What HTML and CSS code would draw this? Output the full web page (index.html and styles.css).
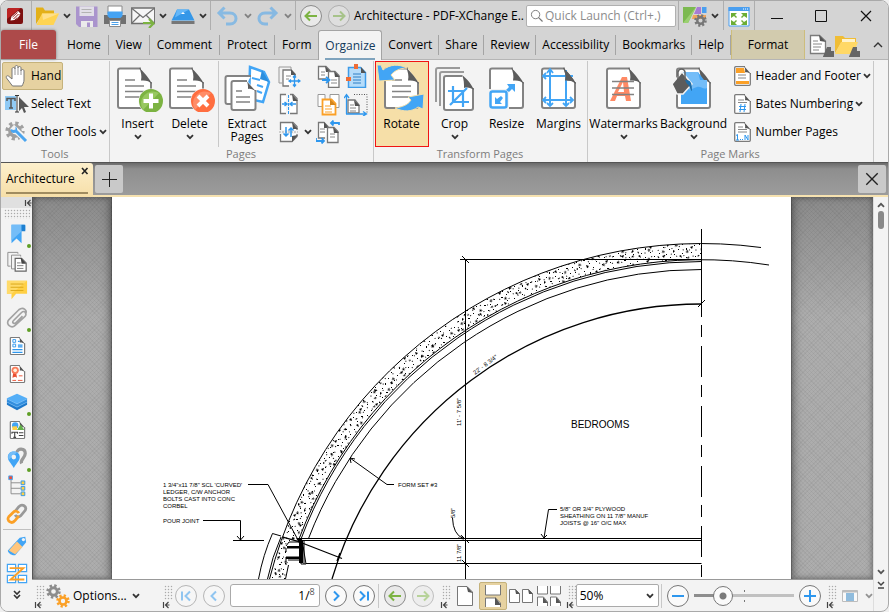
FILE: index.html
```html
<!DOCTYPE html>
<html lang="en">

<head>
    <meta charset="UTF-8">
    <meta name="viewport" content="width=device-width, initial-scale=1.0">
    <title>Architecture - PDF-XChange Editor</title>
    <link rel="stylesheet" href="styles.css">
</head>

<body>
    <!-- Shared icons -->
    <svg class="sprite" aria-hidden="true">
        <symbol id="chev" viewBox="0 0 8 6"><path d="M1 1.2l3 3 3-3" fill="none" stroke="currentColor" stroke-width="1.8"/></symbol>
        <symbol id="page" viewBox="0 0 52 48">
            <path d="M29 4.5H8a2 2 0 0 0-2 2V42a2 2 0 0 0 2 2h29a2 2 0 0 0 2-2V18" fill="#fff" stroke="#838383" stroke-width="2"/>
            <path d="M27 3.5c4 4 10 10 13 16.500-3-3-6-4-11-3.500 1-5 0-9-2-13z" fill="#5c5c5c"/>
        </symbol>
        <symbol id="lines" viewBox="0 0 52 48"><path d="M13 16h10M13 22h19M13 27.500h19M13 33h19" stroke="#838383" stroke-width="1.6"/></symbol>
        <symbol id="doc" viewBox="0 0 24 24">
            <path d="M15 2.700H5.700a1 1 0 0 0-1 1v16.600a1 1 0 0 0 1 1h13.600a1 1 0 0 0 1-1V9" fill="#fff" stroke="#7b7b7b" stroke-width="1.3"/>
            <path d="M14 2l7 8c-2-1.500-4-2-6-1.800.500-2 0-4.200-1-6.200z" fill="#555"/>
        </symbol>
        <symbol id="left" viewBox="0 0 24 24"><circle cx="12" cy="12" r="10.5" fill="#e9e9e9" stroke="#8a8a8a"/><path d="M6.500 12H18M11 7.500L6.500 12l4.500 4.500" fill="none" stroke="#7cb342" stroke-width="2"/></symbol>
        <symbol id="right" viewBox="0 0 24 24"><circle cx="12" cy="12" r="10.5" fill="#e9e9e9" stroke="#8a8a8a"/><path d="M6 12h11.500M13 7.500l4.500 4.500-4.500 4.500" fill="none" stroke="#7cb342" stroke-width="2"/></symbol>
        <symbol id="collapse" viewBox="0 0 8 8"><path d="M1.500 1v6M3 4h4.500M6.500 1l-3 3 3 3" fill="none" stroke="#444" stroke-width="1.2"/></symbol>
        <symbol id="binoc" viewBox="0 0 12 12"><path d="M3 1h2v2h2V1h2l2.500 6v4H7V8H5v3H.500V7z" fill="#666"/><path d="M2 7h2v3H2zM8 7h2v3H8z" fill="#8fa9bd"/></symbol>
        <symbol id="gear" viewBox="0 0 16 16"><circle cx="8" cy="8" r="6.2" fill="none" stroke="currentColor" stroke-width="3" stroke-dasharray="2.5 2.37"/><circle cx="8" cy="8" r="4" fill="none" stroke="currentColor" stroke-width="3"/></symbol>
    </svg>

    <div class="window">
        <header class="titlebar">
            <div class="bar-group app">
                <svg width="18" height="18" viewBox="0 0 18 18"><rect x="1" y="1" width="16" height="16" rx="2" fill="#7d1010"/><path d="M1 3l2-2h12L1 12z" fill="#bb2323"/><path d="M4.500 13.500l1-4L12 4l2.500 2.500-6 6.500zM12 9l2.500-1.500L10 13z" fill="#fff"/><path d="M6.500 10l5-4.500M7.500 12l5-5" stroke="#9c1b1b"/></svg>
            </div>
            <div class="bar-group files">
                <button aria-label="Open"><svg viewBox="0 0 24 24"><path d="M1 20V3.500h7l2 3h9V11H7z" fill="#e3b018"/><path d="M7 9.500h17L18.500 21H1.500z" fill="#ffd452"/><path d="M7 9.500h17L8 16z" fill="#ffe08a"/></svg></button>
                <button class="drop" aria-label="Open options"><svg><use href="#chev"/></svg></button>
                <button class="save" aria-label="Save"><svg viewBox="0 0 24 24"><path d="M1 2.500h21.500V23H4l-3-3z" fill="#a68dcc"/><path d="M4.500 2.500H19V12H4.500z" fill="#e4e0ea"/><path d="M6.500 5.500h10M6.500 8.500h10" stroke="#b0b0b0"/><path d="M6 17h12v6H6z" fill="#eee"/><path d="M12 18.500h3V23h-3z" fill="#a68dcc"/></svg></button>
                <button class="spaced" aria-label="Print"><svg viewBox="0 0 24 24"><path d="M5 2h14v8H5z" fill="#fff" stroke="#8a8a8a"/><path d="M1 11h22v9H1z" fill="#707070"/><path d="M4.500 7.500h15V12l-2 2h-11l-2-2z" fill="#45a3f3"/><path d="M6.500 16.500h11v6h-11z" fill="#fff" stroke="#8a8a8a"/><path d="M8.500 18.500h7M8.500 20.500h7" stroke="#4a9fe8"/></svg></button>
                <button class="spaced" aria-label="Send"><svg viewBox="0 0 24 24"><path d="M.700 4h23v15.500H.700z" fill="#f6f6f6" stroke="#6f6f6f" stroke-width="1.3"/><path d="M1 4.500l11 9 11-9M1 19l8-8M23 19l-8-8" fill="none" stroke="#6f6f6f" stroke-width="1.2"/><path d="M12 19h10M18 15l4.500 4.500L18 24" fill="none" stroke="#7cb342" stroke-width="2.2"/></svg></button>
                <button class="drop" aria-label="Send options"><svg><use href="#chev"/></svg></button>
                <button aria-label="Scan"><svg viewBox="0 0 24 24"><path d="M6 5.500h12l5.500 11H.500z" fill="#3597e8"/><path d="M6 5.500h12l-14 8z" fill="#65b7f8"/><path d="M10 10l2-2 2 2z" fill="#fff"/><path d="M.500 17h23v3H.500z" fill="#777"/></svg></button>
                <button class="drop" aria-label="Scan options"><svg><use href="#chev"/></svg></button>
            </div>
            <div class="bar-group history">
                <button class="dim" aria-label="Undo"><svg viewBox="0 0 24 24"><path d="M8.500 3.500L3 9l5.500 5.500M4 9h10c8 0 8 11 0 11h-4" fill="none" stroke="#3c9ff0" stroke-width="3"/></svg></button>
                <button class="drop dim" aria-label="Undo list"><svg><use href="#chev"/></svg></button>
                <button class="dim" aria-label="Redo"><svg viewBox="0 0 24 24"><path d="M14.500 3.500L20 9l-5.500 5.500M19 9H9c-8 0-8 11 0 11h3" fill="none" stroke="#3c9ff0" stroke-width="3"/></svg></button>
                <button class="drop dim" aria-label="Redo list"><svg><use href="#chev"/></svg></button>
            </div>
            <div class="bar-group nav">
                <button aria-label="Previous view"><svg><use href="#left"/></svg></button>
                <button class="spaced dim" aria-label="Next view"><svg><use href="#right"/></svg></button>
            </div>
            <h1>Architecture - PDF-XChange E..</h1>
            <label class="search">
                <svg viewBox="0 0 14 14"><circle cx="6" cy="6" r="4.5" fill="none" stroke="#777"/><path d="M9 9l4.500 4.500" stroke="#777" stroke-width="1.3"/></svg>
                <input type="text" placeholder="Quick Launch (Ctrl+.)" aria-label="Quick Launch">
            </label>
            <div class="bar-group theme">
                <button aria-label="Themes"><svg viewBox="0 0 24 24"><path d="M0 3h13L5 19H0z" fill="#7cb950"/><path d="M13 3L5 19H0z" fill="#9bd071"/><path d="M14 3h4v7h-7z" fill="#a77bd5"/><path d="M19 3h4.500v6H19z" fill="#4a9ff0"/><path d="M10 11h13v4H9z" fill="#f3a65c"/><svg x="11" y="10" width="13" height="13" color="#777"><use href="#gear"/></svg></svg></button>
                <button class="drop" aria-label="Theme list"><svg><use href="#chev"/></svg></button>
            </div>
            <div class="bar-group full">
                <button aria-label="Full screen"><svg viewBox="0 0 24 24"><path d="M2 3.500h20V22H2z" fill="#fff" stroke="#4a9ff0"/><path d="M1.500 3h21v4h-21z" fill="#4a9ff0"/><path d="M16 5h1M18 5h1M20 5h1" stroke="#fff"/><path d="M4 9h6l-2 2 2 2-1 1-2-2-3 2zM20 9h-6l2 2-2 2 1 1 2-2 3 2zM4 21h6l-2-2 2-2-1-1-2 2-3-2zM20 21h-6l2-2-2-2 1-1 2 2 3-2z" fill="#6cad35"/></svg></button>
            </div>
            <div class="win-buttons">
                <button aria-label="Minimize"><svg viewBox="0 0 14 14"><path d="M1 9.500h12" stroke="#111"/></svg></button>
                <button aria-label="Maximize"><svg viewBox="0 0 14 14"><path d="M1.500 1.500h11v11h-11z" fill="none" stroke="#111"/></svg></button>
                <button aria-label="Close"><svg viewBox="0 0 14 14"><path d="M2 2l10 10M12 2L2 12" stroke="#111" stroke-width="1.2"/></svg></button>
            </div>
        </header>

        <nav class="tabs">
            <button class="file-tab">File</button>
            <div class="tab-list">
                <button>Home</button>
                <button>View</button>
                <button>Comment</button>
                <button>Protect</button>
                <button class="no-line">Form</button>
                <button class="active">Organize</button>
                <button>Convert</button>
                <button>Share</button>
                <button>Review</button>
                <button>Accessibility</button>
                <button>Bookmarks</button>
                <button>Help</button>
            </div>
            <button class="format-tab">Format</button>
            <div class="tab-tools">
                <button aria-label="Find"><svg viewBox="0 0 26 24"><path d="M11.500 2.500h-9v18h15V8z" fill="#fff" stroke="#7b7b7b" stroke-width="1.3"/><path d="M11 2l7 7-6-1z" fill="#555"/><path d="M5 8h5M5 11h9M5 14h8M5 17h6" stroke="#888"/><svg x="12" y="12" width="11" height="11"><use href="#binoc"/></svg></svg></button>
                <button aria-label="Search"><svg viewBox="0 0 26 24"><path d="M1 20V3h8l2 2h11v5H7z" fill="#f0bd35"/><path d="M7 9h17l-5 12H1z" fill="#ffd866"/><path d="M8 6h13v3H8z" fill="#fff3cc"/><svg x="12" y="12" width="11" height="11"><use href="#binoc"/></svg></svg></button>
                <button class="fold" aria-label="Collapse ribbon"><svg viewBox="0 0 10 6"><path d="M1 5l4-4 4 4" fill="none" stroke="#333" stroke-width="1.4"/></svg></button>
            </div>
        </nav>

        <section class="ribbon">
            <div class="group">
                <div class="group-body rows">
                    <button class="row-btn selected"><svg viewBox="0 0 24 24"><path d="M7.500 22l-6-8c-1-2 1-3 2.500-1.500L7 15V5c0-2 3-2 3 0V3c0-2 3-2 3 0v1c0-2 3-2 3 0v3c0-2 3-2 3 0v9c0 2-1 4-2 6z" fill="#fff" stroke="#777"/><path d="M10 5v6M13 4v7M16 6v5" stroke="#999"/></svg>Hand</button>
                    <button class="row-btn"><svg viewBox="0 0 24 24"><path d="M0 4h11v14H0z" fill="#90caf5"/><path d="M2 9V6.500h8V9M6 6.500V16M4 16h4" fill="none" stroke="#555" stroke-width="1.5"/><path d="M10 3.500h4M10 20h4M12 3.500V20" stroke="#333"/><path d="M14 5v14l3-3 2 5 2-1-2-5h5z" fill="#555"/></svg>Select Text</button>
                    <button class="row-btn"><svg viewBox="0 0 24 24"><svg x="0" y="1" width="20" height="20" color="#a0a0a0"><use href="#gear"/></svg><path d="M7 7l14 13" stroke="#f3f3f3" stroke-width="6"/><path d="M11 11l10 10" stroke="#4aa5f0" stroke-width="3"/><path d="M5.500 9c0 4 3 5 6 3 1-2 1-4-1-5.500v3l-2 .500z" fill="#4aa5f0"/></svg>Other Tools<svg class="chev"><use href="#chev"/></svg></button>
                </div>
                <h2>Tools</h2>
            </div>

            <div class="group">
                <div class="group-body pages">
                    <button class="big"><svg viewBox="0 0 52 48"><use href="#page"/><use href="#lines"/><circle cx="39" cy="37" r="12.5" fill="#f3f3f3"/><circle cx="39" cy="37" r="12" fill="#7cb342"/><path d="M31 46a12 12 0 0 1 16-17z" fill="#98c860"/><path d="M39 29.500v15M31.500 37h15" stroke="#fff" stroke-width="4"/></svg>Insert<svg class="chev"><use href="#chev"/></svg></button>
                    <button class="big"><svg viewBox="0 0 52 48"><use href="#page"/><use href="#lines"/><circle cx="39" cy="37" r="12.5" fill="#f3f3f3"/><circle cx="39" cy="37" r="12" fill="#ff6e40"/><path d="M31 46a12 12 0 0 1 16-17z" fill="#ff8d68"/><path d="M34 32l10 10M44 32L34 42" stroke="#fff" stroke-width="4"/></svg>Delete<svg class="chev"><use href="#chev"/></svg></button>
                    <button class="big line"><svg viewBox="0 0 52 48"><path d="M29 3l14 5 5 10-6 20-14-3z" fill="#fff" stroke="#42a5f5" stroke-width="2.5"/><path d="M31 14l8 2M36 21l6 2M36 27l5 2" stroke="#42a5f5" stroke-width="2"/><path d="M41 6l7 12-9-3z" fill="#2b8ede"/><path d="M30 12H6.500a2 2 0 0 0-2 2v24a2 2 0 0 0 2 2H14" fill="#fff" stroke="#838383" stroke-width="2"/><path d="M26 17H12.500a2 2 0 0 0-2 2v25a2 2 0 0 0 2 2h20a2 2 0 0 0 2-2V26" fill="#fff" stroke="#838383" stroke-width="2"/><path d="M25 16.500l10 11c-3-2-5-3-8-2.500 0-4 0-6-2-8.500z" fill="#5c5c5c"/><path d="M15 27h6M15 33h14M15 38h14" stroke="#838383" stroke-width="1.5"/></svg>Extract Pages</button>
                    <div class="small-grid">
                        <button aria-label="Move pages"><svg viewBox="0 0 24 24"><path d="M14 5V3H2v16h3" fill="none" stroke="#999"/><path d="M18 12v-2l-4-4H6v16h6" fill="#fff" stroke="#777" stroke-width="1.3"/><path d="M14 5l5 6h-5z" fill="#555"/><path d="M9 12h5M9 15h3" stroke="#888"/><path d="M17.500 12v10M12.500 17h10M16 13.500l1.500-2 1.500 2M16 20.500l1.500 2 1.500-2M14 15.500l-2 1.500 2 1.500M21 15.500l2 1.500-2 1.500" fill="none" stroke="#2e97ee" stroke-width="1.3"/></svg></button>
                        <i></i>
                        <button aria-label="Duplicate pages"><svg viewBox="0 0 24 24"><path d="M10 15H2.500V2.500H10l4 4V8" fill="#fff" stroke="#777" stroke-width="1.3"/><path d="M9 2l6 6h-5z" fill="#555"/><path d="M12.500 7.500H19l4 4v12H12.500z" fill="#fff" stroke="#777" stroke-width="1.3"/><path d="M18 7l6 6h-5z" fill="#555"/><path d="M5 8h4M5 11h4M15 16h6M15 19h6" stroke="#888"/><path d="M6 16h7M10 13l3.500 3-3.500 3" fill="none" stroke="#2e97ee" stroke-width="1.8"/></svg></button>
                        <button aria-label="Replace pages"><svg viewBox="0 0 24 24"><path d="M4.500 3.500h12l5 5v15h-17z" fill="#b5dcfa" stroke="#3d9be8" stroke-width="1.5"/><path d="M9 10h8M9 13h8M9 16h8M9 19h8" stroke="#2f7fc4"/><path d="M17 3l5 6h-5z" fill="#555"/><path d="M10 0h4v5h-4zM2 13h5v4H2z" fill="#ef6c35"/></svg></button>

                        <button aria-label="Split pages"><svg viewBox="0 0 24 24"><path d="M9 2.500H3.500v19H9M13 2.500h3l4 4v15h-7" fill="#fff" stroke="#777" stroke-width="1.3"/><path d="M15 2l6 7h-5z" fill="#555"/><path d="M11.500 3v20" stroke="#2e97ee" stroke-dasharray="3 1"/><path d="M5 12h5M13 12h6M7.500 10L10 12l-2.500 2M15.500 10L13 12l2.500 2" fill="none" stroke="#2e97ee" stroke-width="1.5"/></svg></button>
                        <i></i>
                        <button aria-label="Merge pages"><svg viewBox="0 0 24 24"><path d="M2 2.500h7v12H2zM14 2.500h9v13h-9z" fill="#fff" stroke="#999"/><path d="M6.500 7.500h9l4 4v11h-13z" fill="#fff" stroke="#fba026" stroke-width="1.8"/><path d="M14 7l6 6h-6z" fill="#d5851c"/><path d="M9 14h6M9 17h7M9 20h7" stroke="#fba026"/></svg></button>
                        <button aria-label="Page size"><svg viewBox="0 0 24 24"><path d="M10 2.500h13v18" fill="none" stroke="#555" stroke-dasharray="1 1.5"/><path d="M4 8h7l4 5v8H4z" fill="#fff" stroke="#777" stroke-width="1.3"/><path d="M10 8l6 6h-5z" fill="#555"/><path d="M6 13h4M6 16h6M6 19h6" stroke="#888"/><path d="M2.500 22V3M0 6l2.500-3.500L5 6M2 22h20M19 19.500l3.500 2.500-3.500 2" fill="none" stroke="#2e97ee" stroke-width="1.3"/></svg></button>

                        <button aria-label="Swap halves"><svg viewBox="0 0 24 24"><path d="M3.500 10V2.500H16l4 4V10M3.500 14v7.500H15l5-5V14" fill="#fff" stroke="#777" stroke-width="1.3"/><path d="M15 2l6 7h-5zM21 15l-6 7v-6z" fill="#555"/><path d="M2 12h19" stroke="#aaa" stroke-dasharray="2 1"/><path d="M9 7v9M6.500 13.500L9 16l2.500-2.500M14 17V8M11.500 10.500L14 8l2.500 2.500" fill="none" stroke="#2e97ee" stroke-width="1.5"/></svg></button>
                        <button class="drop" aria-label="More page tools"><svg><use href="#chev"/></svg></button>
                        <button aria-label="Swap pages"><svg viewBox="0 0 24 24"><path d="M9 18H2.500V2.500H8l4 4V8" fill="#fff" stroke="#777" stroke-width="1.3"/><path d="M8 2l5 6H8z" fill="#555"/><path d="M11.500 7.500H18l4 4v11H11.500z" fill="#fff" stroke="#777" stroke-width="1.3"/><path d="M17 7l6 6h-5z" fill="#555"/><path d="M4 9h5M4 12h5M14 14h5M14 17h5" stroke="#888"/><path d="M23 5V3h-8M17.500.500L15 3l2.500 2.500M0 18v3h8M5.500 18L8 21l-2.500 2.500" fill="none" stroke="#2e97ee" stroke-width="1.8"/></svg></button>
                    </div>
                </div>
                <h2>Pages</h2>
            </div>

            <div class="group">
                <div class="group-body transform">
                    <button class="big hot"><svg viewBox="0 0 52 48"><use href="#page" x="3"/><use href="#lines" x="3"/><path d="M1 1h4l2 5c7-6 16-6 24-2-7 0-13 3-16 7l4 5-16 1z" fill="#42a5f5" stroke="#f6dfa8"/><path d="M48 30l-1 15-5-2c-6 5-15 5-23 1 7-1 13-3 16-8l-3-3z" fill="#42a5f5" stroke="#f6dfa8"/></svg>Rotate</button>
                    <button class="big"><svg viewBox="0 0 52 48"><path d="M31 4H9a2 2 0 0 0-2 2v32M35 8H13a2 2 0 0 0-2 2v32" fill="none" stroke="#9a9a9a" stroke-width="2"/><path d="M33 12H17a2 2 0 0 0-2 2v30a2 2 0 0 0 2 2h25a2 2 0 0 0 2-2V24" fill="#fff" stroke="#838383" stroke-width="2"/><path d="M33 11c4 3 9 8 12 15-3-2-6-3-10-2 0-4 0-9-2-13z" fill="#5c5c5c"/><path d="M24 22v16h16M19 27h15v16M21 41l17-17" fill="none" stroke="#42a5f5" stroke-width="2.2"/></svg>Crop<svg class="chev"><use href="#chev"/></svg></button>
                    <button class="big"><svg viewBox="0 0 52 48"><use href="#page" x="3"/><rect x="6" y="25" width="22" height="23" fill="#f3f3f3"/><rect x="9.5" y="27.5" width="16" height="16" rx="2" fill="#fff" stroke="#42a5f5" stroke-width="2.5"/><path d="M14 33v7h7l-2-2 3-4-2-2-4 3zM26 20h8v8l-3-3-3 3-3-2 3-3z" fill="#42a5f5"/></svg>Resize</button>
                    <button class="big"><svg viewBox="0 0 52 48"><use href="#page" x="3"/><path d="M10 12h30M10 36h30M17 6v36M33 6v36" stroke="#42a5f5" stroke-width="2"/><path d="M14 9l3-4 3 4M14 39l3 3 3-3M30 39l3 3 3-3M13 9l-3 3 3 3M13 33l-3 3 3 3M37 33l3 3-3 3" fill="none" stroke="#42a5f5" stroke-width="1.8"/><path d="M30 3.500c4 4 10 10 13 16.500-3-3-6-4-11-3.500 1-5 0-9-2-13z" fill="#5c5c5c"/></svg>Margins</button>
                </div>
                <h2>Transform Pages</h2>
            </div>

            <div class="group">
                <div class="group-body marks">
                    <button class="big wide"><svg viewBox="0 0 52 48"><use href="#page" x="3"/><path d="M12 37h5l2-5h8l1 5h5L29 13h-5zm8-9l5-10 1 10z" fill="#ff8a65"/><path d="M14 17.500h22M14 24h22M14 30.500h22" stroke="#838383" stroke-width="1.6"/></svg>Watermarks<svg class="chev"><use href="#chev"/></svg></button>
                    <button class="big wide"><svg viewBox="0 0 52 48"><use href="#page" x="3"/><path d="M13 8h17l9 12v20H13z" fill="#42a5f5"/><path d="M13 8h17l2 8h7v8c-4 2-6-2-10-1s-6 4-9 2-5-2-7-1z" fill="#74bdf8"/><path d="M4 20L14 8l10 12-9 10H9z" fill="#5c5c5c" stroke="#f3f3f3" stroke-width="1.5"/><path d="M10 15V8c1-4 6-4 7 0v8" fill="none" stroke="#666" stroke-width="1.5"/><path d="M17 16c6 0 7 3 7 11-2-1-2-6-5-7z" fill="#1d6da8"/></svg>Background<svg class="chev"><use href="#chev"/></svg></button>
                    <div class="rows">
                        <button class="row-btn"><svg viewBox="0 0 24 24"><use href="#doc"/><path d="M6 4h8l1 5H6zM6 17h13v3H6z" fill="#fba026"/><path d="M8 11h8M8 14h8" stroke="#888"/></svg>Header and Footer<svg class="chev"><use href="#chev"/></svg></button>
                        <button class="row-btn"><svg viewBox="0 0 24 24"><use href="#doc"/><path d="M8 8h6M8 10.500h9" stroke="#888"/><path d="M11 12l-1 8M15 12l-1 8M9 14.500h7M9 17.500h7" stroke="#2e97ee"/></svg>Bates Numbering<svg class="chev"><use href="#chev"/></svg></button>
                        <button class="row-btn"><svg viewBox="0 0 24 24"><use href="#doc"/><path d="M8 7h5M8 9.500h9M8 12h9" stroke="#888"/><path d="M6 15.500l1.500-1V20M6 20h3M10.500 19v1M12.500 19v1M15 20v-5l3 5v-5" fill="none" stroke="#2e97ee"/></svg>Number Pages</button>
                    </div>
                </div>
                <h2>Page Marks</h2>
            </div>
        </section>

        <div class="doc-tabs">
            <div class="doc-tab">
                <a href="#doc-canvas">Architecture</a>
                <button aria-label="Close Architecture"><svg viewBox="0 0 8 8"><path d="M1 1l5.500 6M6.500 1L1 7" stroke="#222" stroke-width="1.6"/></svg></button>
            </div>
            <button class="new-tab" aria-label="New tab"><svg viewBox="0 0 16 16"><path d="M8.500 1v15M1 8.500h15" stroke="#222"/></svg></button>
            <button class="close-doc" aria-label="Close document"><svg viewBox="0 0 14 14"><path d="M2 2l10 10M12 2L2 12" stroke="#222" stroke-width="1.2"/></svg></button>
        </div>

        <main class="work">
            <aside class="sidebar">
                <button class="side-head" aria-label="Collapse panes"><svg><use href="#collapse"/></svg></button>
                <div class="grip"></div>
                <button class="dot" aria-label="Bookmarks"><svg viewBox="0 0 24 24"><path d="M6 2h15v6h-4v14l-5.500-5L6 22z" fill="#42a5f5"/><path d="M6 2h11v7L6 19z" fill="#74bdf8"/><path d="M17 2h3a1 1 0 0 1 1 1v6h-4z" fill="#1e7fd0"/></svg></button>
                <button aria-label="Thumbnails"><svg viewBox="0 0 24 24"><path d="M13 3V1.500H2v15h3M16 6V4.500H6v15h4" fill="none" stroke="#8a8a8a"/><path d="M10 8h7l5 5v9H10z" fill="#fff" stroke="#666" stroke-width="1.3"/><path d="M16 7l6 7h-5z" fill="#444"/><path d="M12 13h4M12 16h7M12 19h7" stroke="#777"/></svg></button>
                <button aria-label="Comments"><svg viewBox="0 0 24 24"><path d="M1 2h22v14H11l-5 6v-6H1z" fill="#ffd045"/><path d="M1 2h22L6 16H1z" fill="#ffdb6b"/><path d="M5 5.500h14M5 9h14M5 12.500h14" stroke="#d9a514"/></svg></button>
                <button class="dot" aria-label="Attachments"><svg viewBox="0 0 24 24"><path d="M8 15l9-9c3-3 6 1 4 4L10 20c-4 4-11-1-7-6L14 3c5-4 10 1 7 5M8 15c-2 2 1 4 3 2l7-7" fill="none" stroke="#a2a2a2" stroke-width="1.8"/></svg></button>
                <button aria-label="Fields"><svg viewBox="0 0 24 24"><use href="#doc"/><path d="M7.500 5h3v3h-3zM7.500 10h3v3h-3z" fill="none" stroke="#2e97ee"/><path d="M13 7h2M13 11h5M13 13h5M7 16h11M7 19h11" stroke="#2e97ee" stroke-width="1.3"/></svg></button>
                <button aria-label="Signatures"><svg viewBox="0 0 24 24"><use href="#doc"/><path d="M8 10l-1 6 3-1 2 1-1-6z" fill="#e94f32"/><circle cx="10" cy="8" r="4" fill="#fa7d5c"/><circle cx="10" cy="8" r="2" fill="#fff1dc"/><path d="M7 19h4M13 19h5M14 14h4" stroke="#e94f32"/></svg></button>
                <button class="dot" aria-label="Layers"><svg viewBox="0 0 24 24"><path d="M1 15l11 6 11-6v-4H1z" fill="#1e78ca"/><path d="M1 11l11 6 11-6V8H1z" fill="#338fdf"/><path d="M1 8l11-5 11 5-11 6z" fill="#54aef7"/><path d="M1 12l11 5.500L23 12M1 8.500L12 14l11-5.500" fill="none" stroke="#8dccff" stroke-width=".8"/></svg></button>
                <button aria-label="Content"><svg viewBox="0 0 24 24"><use href="#doc"/><circle cx="10" cy="7" r="3.5" fill="#42a5f5"/><path d="M7 8h5v4H7z" fill="#ffd045"/><path d="M16 6l4 6h-8z" fill="#63b04b"/><path d="M6.500 16v-1.500h6V16M9.500 14.500V20M8 20h3M14 15h5M14 18h5" fill="none" stroke="#444" stroke-width="1.2"/></svg></button>
                <button class="dot" aria-label="Destinations"><svg viewBox="0 0 24 24"><path d="M17 18c-2-4 4-6 4-11 0-6-9-6-9-1" fill="none" stroke="#999" stroke-width="3.5"/><path d="M8.500 23C5 17 2 15 2 11c0-8 13-8 13 0 0 4-3 6-6.500 12z" fill="#42a5f5"/><path d="M3 14c-3-8 5-11 9-8z" fill="#74bdf8"/><circle cx="8.5" cy="11" r="2.5" fill="#f3f3f3"/></svg></button>
                <button aria-label="Structure"><svg viewBox="0 0 24 24"><path d="M5.500 4v16.500H16M5.500 8.500H16M5.500 14.500H16" fill="none" stroke="#888"/><path d="M3 1h4v4H3z" fill="#ef4c36" stroke="#42a5f5"/><path d="M16.500 6.500h4v4h-4zM16.500 12.500h4v4h-4zM16.500 18.500h4v4h-4z" fill="#ffd045" stroke="#2e97ee"/></svg></button>
                <button aria-label="Links"><svg viewBox="0 0 24 24"><path d="M10 9l4-5c4-4 9 0 7 4l-5 6c-2 2-5 1-6-1" fill="none" stroke="#999" stroke-width="3"/><path d="M14 14l-4 5c-4 5-10 0-7-4l5-5c2-2 5-1 6 1" fill="none" stroke="#fba026" stroke-width="3"/></svg></button>
                <hr>
                <button aria-label="Tags"><svg viewBox="0 0 24 24"><path d="M2 17L15 3l6-1 1 6L10 22c-3 1-8-2-8-5z" fill="#42a5f5"/><path d="M3 17L12 7l6 6-8 8z" fill="#ffc67d"/><circle cx="19" cy="5" r="1.8" fill="#f3f3f3"/></svg></button>
                <button aria-label="Order"><svg viewBox="0 0 24 24"><path d="M1.500 1.500h9v8h-9zM13.500 1.500h9v8h-9zM1.500 13.500h9v8h-9zM13.500 13.500h9v8h-9z" fill="#fff" stroke="#42a5f5" stroke-width="1.3"/><path d="M4 5.500h15L5 18h15" fill="none" stroke="#fba026" stroke-width="2"/></svg></button>
                <button class="more" aria-label="More panes"><svg viewBox="0 0 8 10"><path d="M1 1l3 3 3-3M1 5l3 3 3-3" fill="none" stroke="#333" stroke-width="1.6"/></svg></button>
            </aside>

            <div class="center">
                <div class="canvas" id="doc-canvas">
                    <div class="paper">
                        <svg viewBox="112 197 679 382" role="img" aria-label="Bedroom wall section">
                            <defs>
                                <pattern id="concrete" width="41" height="37" patternUnits="userSpaceOnUse">
                                    <path d="M2 3h1v1h-1zM9 1h2v1h-2zM15 4h1v1h-1zM22 2h1v1h-1zM28 5h1v1h-1zM36 3h1v1h-1zM5 8h1v1h-1zM19 8h1v1h-1zM25 10h1v1h-1zM33 9h2v1h-2zM39 8h1v1h-1zM1 13h1v1h-1zM10 12h1v1h-1zM16 13h1v2h-1zM29 14h1v1h-1zM37 14h1v1h-1zM6 17h1v1h-1zM13 18h1v1h-1zM22 17h1v1h-1zM33 19h1v1h-1zM2 22h1v1h-1zM17 22h2v1h-2zM26 22h1v1h-1zM38 23h1v1h-1zM7 25h1v1h-1zM13 27h1v1h-1zM22 27h1v1h-1zM30 26h1v2h-1zM3 31h1v1h-1zM10 32h1v1h-1zM18 32h1v1h-1zM26 31h1v1h-1zM35 30h1v1h-1zM39 34h1v1h-1zM14 35h1v1h-1zM30 35h1v1h-1z"/>
                                    <path d="M12 6l3 1-2 2zM31 2l3-1-1 3zM21 13l2-2 1 3zM5 19l3 1-2 2zM28 18l2-1 1 3zM11 22l2 1-2 2zM34 25l3-1-1 3zM17 28l2 1-2 2zM6 34l3-1-1 3zM23 34l2-1 1 3zM2 10l2-1v2zM36 18l2 1-2 1z"/>
                                </pattern>
                                <pattern id="gravel" href="#concrete" patternTransform="rotate(52)"/>
                            </defs>
                            <path d="M269.500 579A446 446 0 0 1 701.500 243.500V259.500A430 430 0 0 0 299 539L290 544L286 579z" fill="url(#concrete)"/>
                            <path d="M269.500 579A446 446 0 0 1 701.500 243.500V259.500A430 430 0 0 0 299 539L290 544L286 579z" fill="url(#gravel)"/>
                            <g fill="none" stroke="#000">
                                <path d="M269.500 579A446 446 0 0 1 761 247.500"/>
                                <path d="M299 539A430 430 0 0 1 769 265"/>
                                <path d="M301 539A428.500 428.500 0 0 1 701.500 261.500"/>
                                <path d="M308.500 538.500A420.500 420.500 0 0 1 701.500 269.500"/>
                                <path d="M332 579A385.500 385.500 0 0 1 701.500 304" stroke-width="1.3"/>
                                <path d="M258.500 579Q263 555 272.500 533.500L281 536M267.500 579Q272 557 281 537"/>
                                <path d="M285.500 579L288.500 565"/>
                                <path d="M460 259.500H701.500M465.500 259V579M462 256l7 7M698 307l7-7"/>
                                <path d="M701.500 229V316M701.500 526V557"/>
                                <path d="M701.500 286V579" stroke-dasharray="31 8 12 9"/>
                                <path d="M299 538.500H701.500M299 540.500H701.500M306 563.500H701.500"/>
                                <path d="M462 536l7 7M462 560l7 7"/>
                                <path d="M248 484.500H268L297 538"/>
                                <path d="M203 520.500H240.500V540M233 540.500H264M237 536l3.500 4 3.500-4"/>
                                <path d="M394 484.500H387L350 458M351 463l-1-5 5 1"/>
                                <path d="M557 509.500H548.500L544 538M541 534l3 4 3-3"/>
                                <path d="M452.500 518Q453 534 463 538.500M458 538l6 1-3-4"/>
                                <path d="M283 537L297 541L342 558.500M337 561l3-8" stroke-width="1.3"/>
                                <path d="M302 540L306 564H301V541M304 541V564M286 546l3-4H300M287 548H304M286 565V557H302M288 560H302M286 548v4"/>
                            </g>
                            <path d="M296 538h5l2 3v22h-4V543zM287 546h14v2h-14zM286 557h14v2h-14z"/>
                            <g class="notes">
                                <text x="163" y="487">1 3/4"x11 7/8" SCL 'CURVED'</text>
                                <text x="163" y="494">LEDGER, C/W ANCHOR</text>
                                <text x="163" y="501">BOLTS CAST INTO CONC</text>
                                <text x="163" y="508">CORBEL</text>
                                <text x="163" y="523">POUR JOINT</text>
                                <text x="398" y="487">FORM SET #3</text>
                                <text x="560" y="511">5/8" OR 3/4" PLYWOOD</text>
                                <text x="560" y="518">SHEATHING ON 11 7/8" MANUF</text>
                                <text x="560" y="525">JOISTS @ 16" O/C MAX</text>
                                <text transform="translate(461 426) rotate(-90)">11' - 7 5/8"</text>
                                <text transform="translate(455 518) rotate(-90)">5/8"</text>
                                <text transform="translate(461 562) rotate(-90)">11 7/8"</text>
                                <text transform="translate(475 375) rotate(-37)">22' - 8 3/4"</text>
                            </g>
                            <text class="room" x="571" y="428">BEDROOMS</text>
                        </svg>
                    </div>
                </div>

                <footer class="status">
                    <div class="grip-end"><svg><use href="#collapse"/></svg></div>
                    <button class="options"><svg viewBox="0 0 24 24"><svg x="0" y="0" width="15" height="15" color="#8d8d8d"><use href="#gear"/></svg><svg x="10" y="10" width="14" height="14" color="#fba026"><use href="#gear"/></svg></svg>Options...<svg class="chev"><use href="#chev"/></svg></button>
                    <div class="grip-end"><svg><use href="#collapse"/></svg></div>
                    <div class="pager">
                        <button class="dim" aria-label="First page"><svg viewBox="0 0 24 24"><circle cx="12" cy="12" r="10.5" fill="#fafafa" stroke="#777"/><path d="M8 7.500v9M16 7.500L11.500 12l4.500 4.500" fill="none" stroke="#2e97ee" stroke-width="2"/></svg></button>
                        <button class="dim" aria-label="Previous page"><svg viewBox="0 0 24 24"><circle cx="12" cy="12" r="10.5" fill="#fafafa" stroke="#777"/><path d="M14 7.500L9.500 12l4.500 4.500" fill="none" stroke="#2e97ee" stroke-width="2"/></svg></button>
                        <label class="page-box"><input type="text" value="1" aria-label="Page"><span>/<sup>8</sup></span></label>
                        <button aria-label="Next page"><svg viewBox="0 0 24 24"><circle cx="12" cy="12" r="10.5" fill="#fafafa" stroke="#777"/><path d="M10 7.500l4.500 4.500-4.500 4.500" fill="none" stroke="#2e97ee" stroke-width="2"/></svg></button>
                        <button aria-label="Last page"><svg viewBox="0 0 24 24"><circle cx="12" cy="12" r="10.5" fill="#fafafa" stroke="#777"/><path d="M16 7.500v9M8 7.500l4.500 4.500L8 16.500" fill="none" stroke="#2e97ee" stroke-width="2"/></svg></button>
                    </div>
                    <div class="pager views">
                        <button aria-label="Back"><svg><use href="#left"/></svg></button>
                        <button class="dim" aria-label="Forward"><svg><use href="#right"/></svg></button>
                    </div>
                    <div class="grip-end"><svg><use href="#collapse"/></svg></div>
                    <div class="layouts">
                        <button aria-label="Single page"><svg viewBox="0 0 24 24"><path d="M14 2.500H4.500v19h15V8z" fill="#fff" stroke="#777"/><path d="M13.500 2l6.500 7-5-1z" fill="#555"/></svg></button>
                        <button class="selected" aria-label="Continuous"><svg viewBox="0 0 24 24"><path d="M4.500 1v10h15V1M4.500 23v-9h10l5 5v4" fill="#fff" stroke="#777"/><path d="M14 13l6 8h-6z" fill="#555"/></svg></button>
                        <button aria-label="Two pages"><svg viewBox="0 0 24 24"><path d="M.500 5.500h6l4 4v9H.500zM13.500 5.500h6l4 4v9h-10z" fill="#fff" stroke="#777"/><path d="M6 5l5 5H7zM19 5l5 5h-4z" fill="#555"/></svg></button>
                        <button aria-label="Two pages continuous"><svg viewBox="0 0 24 24"><path d="M.500 2v8h10V2M13.500 2v8h10V2M.500 22v-9h6l4 5v4M13.500 22v-9h6l4 5v4" fill="#fff" stroke="#777"/><path d="M6 13l5 6H6zM19 13l5 6h-5z" fill="#555"/></svg></button>
                    </div>
                    <div class="grip-end"><svg><use href="#collapse"/></svg></div>
                    <div class="zoom">
                        <select aria-label="Zoom"><option>50%</option><option>100%</option></select>
                        <svg class="chev"><use href="#chev"/></svg>
                    </div>
                    <div class="zoomer">
                        <button aria-label="Zoom out"><svg viewBox="0 0 24 24"><circle cx="12" cy="12" r="10.5" fill="#fafafa" stroke="#777"/><path d="M6 12h12" stroke="#2e97ee" stroke-width="2"/></svg></button>
                        <input type="range" min="0" max="100" value="24" aria-label="Zoom level">
                        <button aria-label="Zoom in"><svg viewBox="0 0 24 24"><circle cx="12" cy="12" r="10.5" fill="#fafafa" stroke="#777"/><path d="M6 12h12M12 6v12" stroke="#2e97ee" stroke-width="2"/></svg></button>
                    </div>
                    <div class="grip-end"><svg><use href="#collapse"/></svg></div>
                    <button class="pane dim" aria-label="Panes"><svg viewBox="0 0 18 16"><path d="M1.500 2.500h15v11h-15z" fill="#fff" stroke="#888"/><path d="M1.500 2.500h15v2h-15z" fill="#888"/><path d="M5 5h8v8H5z" fill="#2e86c8"/></svg><svg class="chev"><use href="#chev"/></svg></button>
                </footer>
            </div>

            <div class="scroll">
                <svg class="up"><use href="#chev"/></svg>
                <div class="thumb"></div>
                <svg><use href="#chev"/></svg>
                <svg class="end" viewBox="0 0 8 8"><path d="M1 1l3 3 3-3M1 7h6" fill="none" stroke="#444" stroke-width="1.5"/></svg>
            </div>
        </main>
    </div>
</body>

</html>
```
FILE: styles.css
```css
* {
    box-sizing: border-box;
}

body {
    margin: 0;
    background: #f0f0f0;
    color: #000;
    font-family: "Open Sans", "Noto Sans", sans-serif;
    font-size: 12px;
    line-height: 16px;
}

.sprite {
    position: absolute;
    width: 0;
    height: 0;
}

svg {
    display: block;
    flex: none;
}

button, input, select {
    margin: 0;
    padding: 0;
    border: 0;
    background: none;
    color: inherit;
    font: inherit;
}

button > svg {
    width: 24px;
    height: 24px;
}

.window {
    display: flex;
    flex-direction: column;
    height: 100vh;
    overflow: hidden;
    border: 1px solid #a9a9a9;
    border-radius: 8px;
    background: #f3f3f3;
}

.chev, .drop > svg {
    width: 8px !important;
    height: 6px !important;
    color: #333;
}

.dim {
    opacity: 0.5;
}

/* Title bar */
.titlebar {
    display: flex;
    align-items: center;
    height: 29px;
    background: #d4d4d4;
}

.bar-group {
    display: flex;
    align-items: center;
    height: 29px;
    border-right: 1px solid #aeaeae;
}

.app {
    padding: 0 7px 0 5px;
}

.files {
    padding-left: 3px;
}

.history {
    padding-left: 5px;
}

.nav {
    padding-left: 3px;
    border: 0;
}

.bar-group .drop {
    display: flex;
    justify-content: center;
    width: 16px;
}

.files .drop:last-child, .history .drop:last-child {
    width: 15px;
}

.save {
    opacity: 0.9;
}

.spaced {
    margin-left: 4px;
}

.titlebar h1 {
    flex: 1;
    margin: 0 0 0 3px;
    font-size: 12px;
    font-weight: 400;
    white-space: nowrap;
}

.search {
    display: flex;
    align-items: center;
    width: 150px;
    height: 22px;
    margin-right: 2px;
    padding: 0 3px;
    border: 1px solid #b0b0b0;
    border-radius: 2px;
    background: #fff;
}

.search svg {
    width: 13px;
    height: 13px;
}

.search input {
    width: 100%;
    min-width: 0;
    margin-left: 2px;
    outline: 0;
}

.search input::placeholder {
    color: #8c8c8c;
}

.theme {
    padding-left: 4px;
    border-left: 1px solid #aeaeae;
}

.full {
    padding: 0 3px;
}

.win-buttons {
    display: flex;
    width: 133px;
}

.win-buttons button {
    display: flex;
    flex: 1;
    justify-content: center;
}

.win-buttons svg {
    width: 14px;
    height: 14px;
}

/* Ribbon tabs */
.tabs {
    display: flex;
    height: 30px;
    border-bottom: 1px solid #b5b5b5;
    background: #d4d4d4;
}

.file-tab {
    width: 55px;
    border-radius: 3px 3px 0 0;
    background: #ad4a4a;
    box-shadow: 0 0 3px #777;
    color: #fff;
}

.tab-list {
    display: flex;
    flex: 1;
    align-items: center;
    padding-left: 4px;
}

.tab-list button {
    flex: 1 1 auto;
    height: 20px;
    border-right: 1px solid #a4a4a4;
    white-space: nowrap;
}

.tab-list button:nth-child(-n+5) {
    padding: 0 1px;
}

.tab-list .no-line {
    border: 0;
}

.tab-list .active {
    flex: none;
    align-self: stretch;
    width: 64px;
    height: 30px;
    border: 1px solid #a4a4a4;
    border-bottom: 0;
    border-radius: 3px 3px 0 0;
    background: linear-gradient(#7fa3bd, #7fa3bd) center bottom / 50px 2px no-repeat #f3f3f3;
    color: #123a5c;
}

.format-tab {
    width: 74px;
    border: solid #cdbd7c;
    border-width: 0 1px;
    background: #d2cbae;
}

.tab-tools {
    display: flex;
    align-items: center;
    width: 83px;
    padding-left: 3px;
}

.tab-tools svg {
    width: 26px;
    height: 24px;
}

.tab-tools .fold {
    margin-left: 13px;
}

.tab-tools .fold svg {
    width: 10px;
    height: 6px;
}

/* Ribbon */
.ribbon {
    display: flex;
    height: 103px;
    padding-top: 1px;
    border-bottom: 1px solid #555;
}

.group {
    display: flex;
    flex-direction: column;
    border-right: 1px solid #c8c8c8;
}

.group h2 {
    margin: 0;
    color: #7c7c7c;
    font-size: 11px;
    font-weight: 400;
    line-height: 14px;
    text-align: center;
}

.group-body {
    display: flex;
    height: 86px;
}

.rows {
    display: flex;
    flex-direction: column;
    align-items: flex-start;
    padding: 1px 0 1px 1px;
}

.row-btn {
    display: flex;
    align-items: center;
    height: 28px;
    padding: 0 1px 0 2px;
    border: 1px solid transparent;
    white-space: nowrap;
}

.row-btn > svg:first-child {
    margin-right: 2px;
}

.row-btn .chev {
    margin-left: 2px;
}

.selected {
    border: 1px solid #c5b27b;
    border-radius: 2px;
    background: #e6d2a1;
}

.big {
    display: flex;
    flex-direction: column;
    align-items: center;
    width: 52px;
    padding-top: 3px;
    line-height: 13px;
}

.big > svg:first-child {
    width: 52px;
    height: 48px;
    margin-bottom: 5px;
}

.big .chev {
    margin-top: 4px;
}

.pages {
    padding-left: 2px;
}

.pages .line {
    width: 58px;
    margin-left: 2px;
    border-left: 1px solid #c8c8c8;
}

.small-grid {
    display: grid;
    grid-template-columns: 26px 12px 28px 28px;
    grid-template-rows: repeat(3, 28px);
    align-items: center;
    margin: 1px 3px 0 0;
    justify-items: center;
}

.transform {
    padding: 0 2px 0 1px;
}

.hot {
    width: 54px;
    padding-top: 2px;
    border: 1px solid #f01414;
    background: #f6dfa8;
}

.marks {
    padding-left: 1px;
}

.marks .wide {
    width: 70px;
}

.marks .rows {
    padding-left: 0;
}

.marks .row-btn {
    padding-left: 0;
}

/* Document tabs */
.doc-tabs {
    display: flex;
    height: 34px;
    border-bottom: 2px solid #f6e2b0;
    background: linear-gradient(#6b6b6b, #8e8e8e 6px, #9c9c9c);
}

.doc-tab {
    display: flex;
    width: 92px;
    height: 34px;
    padding: 8px 4px 0 5px;
    border-radius: 0 3px 0 0;
    background: linear-gradient(#a08c60, #a08c60) 5px 29px / 82px 2px no-repeat, linear-gradient(#fdf0cc, #f6dfa8);
}

.doc-tab a {
    flex: 1;
    color: #000;
    text-decoration: none;
}

.doc-tab button {
    align-self: flex-start;
    margin-top: -4px;
}

.doc-tab svg {
    width: 8px;
    height: 8px;
}

.new-tab, .close-doc {
    display: flex;
    align-items: center;
    justify-content: center;
    width: 28px;
    height: 28px;
    margin: 2px;
    border-radius: 2px;
    background: #c9c9c9;
}

.new-tab svg, .close-doc svg {
    width: 16px;
    height: 16px;
}

.close-doc {
    margin-left: auto;
}

/* Work area */
.work {
    display: flex;
    flex: 1;
    min-height: 0;
}

.sidebar {
    display: flex;
    flex-direction: column;
    align-items: center;
    width: 31px;
    background: #f3f3f3;
}

.side-head {
    display: flex;
    justify-content: flex-end;
    align-items: center;
    width: 100%;
    height: 11px;
    background: #e0e0e0;
}

.grip {
    flex: none;
    width: 26px;
    height: 10px;
    margin: 1px 0;
    background: radial-gradient(circle, #aaa 30%, transparent 50%) 0 0 / 3px 3px;
}

.sidebar > button:not(.side-head) {
    position: relative;
    display: flex;
    flex: none;
    align-items: center;
    height: 28px;
}

.sidebar .dot::after {
    content: "";
    position: absolute;
    right: -3px;
    bottom: 0;
    width: 4px;
    height: 4px;
    border-radius: 50%;
    background: #5f9f25;
}

.sidebar > button > svg {
    width: 22px;
    height: 22px;
}

.sidebar > .side-head > svg {
    width: 8px;
    height: 8px;
}

.sidebar hr {
    width: 28px;
    height: 1px;
    margin: 1px 0 2px;
    border: 0;
    background: #c0c0c0;
}

.sidebar > .more:not(.side-head) {
    height: 14px;
}

.sidebar > .more > svg {
    width: 8px;
    height: 10px;
}

.center {
    display: flex;
    flex: 1;
    flex-direction: column;
    min-width: 0;
}

.canvas {
    flex: 1;
    min-height: 0;
    padding: 0 82px 0 79px;
    overflow: hidden;
    border-left: 1px solid #555;
    background:
        linear-gradient(rgba(0, 0, 0, 0.2), transparent 120px),
        repeating-linear-gradient(45deg, rgba(0, 0, 0, 0.04) 0 1px, transparent 1px 3px),
        repeating-linear-gradient(-45deg, rgba(0, 0, 0, 0.04) 0 1px, transparent 1px 3px),
        #adadad;
    box-shadow: inset 0 0 6px rgba(0, 0, 0, 0.5);
}

.paper {
    height: 100%;
    overflow: hidden;
    background: #fff;
    box-shadow: 0 0 1px #000, 0 0 10px #333;
}

.paper svg {
    width: 100%;
    height: auto;
}

.paper text {
    font-family: "Liberation Sans", Arial, sans-serif;
}

.notes {
    font-size: 6px;
}

.room {
    font-size: 10px;
}

/* Status bar */
.status {
    display: flex;
    align-items: center;
    height: 32px;
    padding-left: 2px;
    border-top: 1px solid #999;
}

.status button {
    display: flex;
    flex: none;
    align-items: center;
}

.grip-end {
    display: flex;
    flex: none;
    flex-direction: column;
    width: 10px;
    height: 28px;
    padding-top: 3px;
}

.grip-end::before {
    content: "";
    width: 9px;
    height: 15px;
    margin: 0 0 1px 2px;
    background: radial-gradient(circle, #aaa 30%, transparent 50%) 0 0 / 3px 3px;
}

.grip-end svg {
    width: 8px;
    height: 8px;
}

.options {
    margin: 0 22px 0 2px;
    white-space: nowrap;
}

.options > svg:first-child {
    margin-right: 3px;
}

.options .chev {
    margin-left: 5px;
}

.pager {
    display: flex;
    flex: none;
    align-items: center;
    gap: 4px;
    margin-left: 2px;
    padding-right: 2px;
    border-right: 1px solid #c8c8c8;
}

.views {
    margin-left: 4px;
    padding-right: 5px;
    border: 0;
}

.page-box {
    display: flex;
    width: 90px;
    height: 23px;
    align-items: center;
    padding-right: 4px;
    border: 1px solid #aaa;
    border-radius: 3px;
    background: #fff;
}

.page-box input {
    flex: 1;
    min-width: 0;
    text-align: right;
    outline: 0;
}

.page-box sup {
    color: #555;
    font-size: 9px;
    line-height: 0;
}

.layouts {
    display: flex;
    align-items: center;
    padding: 0 3px 0 1px;
}

.layouts button {
    justify-content: center;
    width: 28px;
    height: 28px;
}

.zoom {
    display: flex;
    flex: none;
    align-items: center;
    width: 83px;
    height: 23px;
    padding: 0 4px 0 3px;
    border: 1px solid #aaa;
    border-radius: 2px;
    background: #fff;
}

.zoom select {
    flex: 1;
    appearance: none;
}

.zoomer {
    display: flex;
    align-items: center;
    flex: 1;
    gap: 4px;
    min-width: 0;
    margin-left: 2px;
    padding: 0 4px;
    border-left: 1px solid #c8c8c8;
}

.zoomer input {
    flex: 1;
    min-width: 0;
    height: 20px;
    appearance: none;
    background:
        linear-gradient(#777 2px, transparent 2px 10px, #777 10px) 50px 4px / 1px 12px no-repeat,
        linear-gradient(90deg, #8d8d8d 24%, #c0c0c0 24%) center / 100% 3px no-repeat;
}

.zoomer input::-webkit-slider-thumb {
    appearance: none;
    width: 20px;
    height: 20px;
    border: 1px solid #777;
    border-radius: 50%;
    background: radial-gradient(circle, #7a7a7a 3px, #fafafa 4px);
}

.pane {
    gap: 6px;
    margin-left: 5px;
}

.pane > svg:first-child {
    width: 18px;
    height: 16px;
}

/* Scroll bar */
.scroll {
    display: flex;
    flex-direction: column;
    align-items: center;
    width: 15px;
    padding: 5px 0 22px;
    border-left: 1px solid #ddd;
    color: #555;
}

.scroll svg {
    width: 8px;
    height: 6px;
}

.scroll .up {
    transform: rotate(180deg);
}

.thumb {
    width: 6px;
    height: 18px;
    margin: 3px 0 auto;
    border-radius: 3px;
    background: #888;
}

.scroll .end {
    height: 8px;
    margin-top: 6px;
}
```
